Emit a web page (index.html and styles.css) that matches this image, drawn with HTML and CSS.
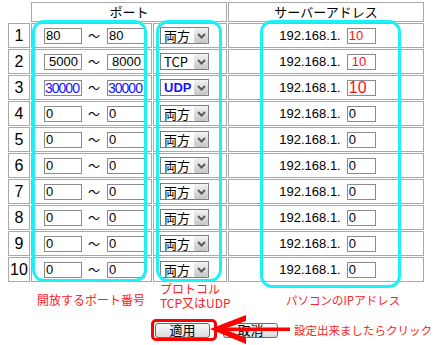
FILE: index.html
```html
<!DOCTYPE html>
<html lang="ja">
<head>
    <meta charset="UTF-8">
    <meta name="viewport" content="width=device-width, initial-scale=1.0">
    <title>ポート設定</title>
    <link rel="stylesheet" href="styles.css">
</head>
<body>
    <div class="page">
        <table class="ports">
            <colgroup>
                <col class="col-num">
                <col class="col-port">
                <col class="col-proto">
                <col class="col-addr">
            </colgroup>
            <tr class="head">
                <th class="blank"></th>
                <th colspan="2">ポート</th>
                <th>サーバーアドレス</th>
            </tr>
            <tr>
                <td class="num">1</td>
                <td><div class="range"><input class="field" value="80"><span class="tilde">～</span><input class="field" value="80"></div></td>
                <td><div class="select"><span class="select-text">両方</span><span class="select-arrow"><svg width="9" height="6" viewBox="0 0 9 6"><path d="M1 1 L4.5 4.5 L8 1" fill="none" stroke="#5a5a5a" stroke-width="2"/></svg></span></div></td>
                <td><div class="addr"><span class="ip">192.168.1.</span><input class="host red" value="10"></div></td>
            </tr>
            <tr>
                <td class="num">2</td>
                <td><div class="range"><input class="field pad" value="5000"><span class="tilde">～</span><input class="field pad" value="8000"></div></td>
                <td><div class="select"><span class="select-text">TCP</span><span class="select-arrow"><svg width="9" height="6" viewBox="0 0 9 6"><path d="M1 1 L4.5 4.5 L8 1" fill="none" stroke="#5a5a5a" stroke-width="2"/></svg></span></div></td>
                <td><div class="addr"><span class="ip">192.168.1.</span><input class="host red pad" value="10"></div></td>
            </tr>
            <tr>
                <td class="num">3</td>
                <td><div class="range"><input class="field blue" value="30000"><span class="tilde">～</span><input class="field blue" value="30000"></div></td>
                <td><div class="select"><span class="select-text blue-bold">UDP</span><span class="select-arrow"><svg width="9" height="6" viewBox="0 0 9 6"><path d="M1 1 L4.5 4.5 L8 1" fill="none" stroke="#5a5a5a" stroke-width="2"/></svg></span></div></td>
                <td><div class="addr"><span class="ip">192.168.1.</span><input class="host red big" value="10"></div></td>
            </tr>
            <tr>
                <td class="num">4</td>
                <td><div class="range"><input class="field" value="0"><span class="tilde">～</span><input class="field" value="0"></div></td>
                <td><div class="select"><span class="select-text">両方</span><span class="select-arrow"><svg width="9" height="6" viewBox="0 0 9 6"><path d="M1 1 L4.5 4.5 L8 1" fill="none" stroke="#5a5a5a" stroke-width="2"/></svg></span></div></td>
                <td><div class="addr"><span class="ip">192.168.1.</span><input class="host" value="0"></div></td>
            </tr>
            <tr>
                <td class="num">5</td>
                <td><div class="range"><input class="field" value="0"><span class="tilde">～</span><input class="field" value="0"></div></td>
                <td><div class="select"><span class="select-text">両方</span><span class="select-arrow"><svg width="9" height="6" viewBox="0 0 9 6"><path d="M1 1 L4.5 4.5 L8 1" fill="none" stroke="#5a5a5a" stroke-width="2"/></svg></span></div></td>
                <td><div class="addr"><span class="ip">192.168.1.</span><input class="host" value="0"></div></td>
            </tr>
            <tr>
                <td class="num">6</td>
                <td><div class="range"><input class="field" value="0"><span class="tilde">～</span><input class="field" value="0"></div></td>
                <td><div class="select"><span class="select-text">両方</span><span class="select-arrow"><svg width="9" height="6" viewBox="0 0 9 6"><path d="M1 1 L4.5 4.5 L8 1" fill="none" stroke="#5a5a5a" stroke-width="2"/></svg></span></div></td>
                <td><div class="addr"><span class="ip">192.168.1.</span><input class="host" value="0"></div></td>
            </tr>
            <tr>
                <td class="num">7</td>
                <td><div class="range"><input class="field" value="0"><span class="tilde">～</span><input class="field" value="0"></div></td>
                <td><div class="select"><span class="select-text">両方</span><span class="select-arrow"><svg width="9" height="6" viewBox="0 0 9 6"><path d="M1 1 L4.5 4.5 L8 1" fill="none" stroke="#5a5a5a" stroke-width="2"/></svg></span></div></td>
                <td><div class="addr"><span class="ip">192.168.1.</span><input class="host" value="0"></div></td>
            </tr>
            <tr>
                <td class="num">8</td>
                <td><div class="range"><input class="field" value="0"><span class="tilde">～</span><input class="field" value="0"></div></td>
                <td><div class="select"><span class="select-text">両方</span><span class="select-arrow"><svg width="9" height="6" viewBox="0 0 9 6"><path d="M1 1 L4.5 4.5 L8 1" fill="none" stroke="#5a5a5a" stroke-width="2"/></svg></span></div></td>
                <td><div class="addr"><span class="ip">192.168.1.</span><input class="host" value="0"></div></td>
            </tr>
            <tr>
                <td class="num">9</td>
                <td><div class="range"><input class="field" value="0"><span class="tilde">～</span><input class="field" value="0"></div></td>
                <td><div class="select"><span class="select-text">両方</span><span class="select-arrow"><svg width="9" height="6" viewBox="0 0 9 6"><path d="M1 1 L4.5 4.5 L8 1" fill="none" stroke="#5a5a5a" stroke-width="2"/></svg></span></div></td>
                <td><div class="addr"><span class="ip">192.168.1.</span><input class="host" value="0"></div></td>
            </tr>
            <tr>
                <td class="num">10</td>
                <td><div class="range"><input class="field" value="0"><span class="tilde">～</span><input class="field" value="0"></div></td>
                <td><div class="select"><span class="select-text">両方</span><span class="select-arrow"><svg width="9" height="6" viewBox="0 0 9 6"><path d="M1 1 L4.5 4.5 L8 1" fill="none" stroke="#5a5a5a" stroke-width="2"/></svg></span></div></td>
                <td><div class="addr"><span class="ip">192.168.1.</span><input class="host" value="0"></div></td>
            </tr>
        </table>

        <div class="notes">
            <div class="note note-port">開放するポート番号</div>
            <div class="note note-proto">プロトコル<br>TCP又はUDP</div>
            <div class="note note-addr">パソコンのIPアドレス</div>
        </div>

        <div class="actions">
            <button class="btn">適用</button>
            <button class="btn">取消</button>
            <span class="hint">設定出来ましたらクリック</span>
        </div>

        <!-- annotations drawn over the form -->
        <div class="mark mark-port"></div>
        <div class="mark mark-proto"></div>
        <div class="mark mark-addr"></div>
        <div class="mark mark-btn"></div>
        <svg class="arrow" width="90" height="34" viewBox="0 0 90 34">
            <rect x="14" y="14.5" width="68" height="3.5" fill="#ff0000"/>
            <polygon points="2,16 38,2 38,8 16,16 38,25 38,31" fill="#ff0000"/>
        </svg>
    </div>
</body>
</html>
```

FILE: styles.css
```css
* {
    box-sizing: border-box;
}
body {
    margin: 0;
    background: #ffffff;
    font-family: "Liberation Sans", "Noto Sans CJK JP", sans-serif;
    color: #000;
}
.page {
    position: relative;
    width: 435px;
    height: 345px;
    overflow: hidden;
}
.ports {
    margin: 1px 0 0 7px;
    width: 418px;
    table-layout: fixed;
    border-collapse: separate;
    border-spacing: 1px;
}
.col-num { width: 22px; }
.col-port { width: 121px; }
.col-proto { width: 74px; }
.col-addr { width: 196px; }
.ports th, .ports td {
    border: 1px solid #a9a9a9;
    padding: 0;
}
.ports th {
    height: 20px;
    font-weight: normal;
    font-size: 13px;
    line-height: 16px;
    font-family: "Noto Sans CJK JP", sans-serif;
}
.ports .blank {
    border: none;
}
.ports td {
    height: 25px;
}
.num {
    text-align: center;
    font-family: "Liberation Sans Narrow", "Liberation Sans", sans-serif;
    font-size: 16px;
}
.range {
    display: flex;
    align-items: center;
    padding-left: 12px;
}
.field, .host {
    height: 16px;
    border: 1px solid #8c8c8c;
    padding: 0 1px;
    margin: 0;
    font-family: "Liberation Sans", sans-serif;
    font-size: 13px;
    background: #fff;
    color: #000;
}
.field {
    width: 38px;
}
.pad {
    padding-left: 4px;
}
.blue {
    color: #1414ff;
    font-size: 14px;
    letter-spacing: -1px;
    padding-left: 0;
}
.tilde {
    width: 12px;
    margin: 0 7px 0 6px;
    font-family: "Noto Sans CJK JP", sans-serif;
    font-size: 12px;
    line-height: 14px;
}
.select {
    display: flex;
    align-items: center;
    width: 49px;
    height: 17px;
    margin-left: 6px;
    border: 1px solid #7f7f7f;
    background: #fff;
}
.select-text {
    flex: 1;
    padding-left: 3px;
    font-family: "Noto Sans CJK JP", sans-serif;
    font-size: 13px;
    line-height: 15px;
}
.blue-bold {
    color: #1414ff;
    font-weight: bold;
    font-family: "Liberation Sans", sans-serif;
}
.select-arrow {
    display: flex;
    align-items: center;
    justify-content: center;
    width: 14px;
    height: 15px;
    border-radius: 2px;
    background: linear-gradient(#f4f4f4, #c6c6c6);
}
.addr {
    display: flex;
    align-items: center;
    justify-content: center;
    gap: 6px;
    padding-left: 3px;
    font-size: 13px;
}
.host {
    width: 29px;
}
.red {
    color: #ff1010;
}
.big {
    font-size: 16px;
}
.notes {
    display: flex;
    align-items: flex-start;
    color: #ff2020;
    font-family: "Noto Sans CJK JP", sans-serif;
    font-size: 12px;
    line-height: 14px;
}
.note-port {
    width: 123px;
    margin-left: 37px;
    margin-top: 10px;
}
.note-proto {
    width: 126px;
    margin-top: -1px;
}
.note-addr {
    margin-top: 10px;
    font-size: 11.5px;
}
.actions {
    display: flex;
    align-items: center;
    margin-top: 12px;
    padding-left: 155px;
}
.btn {
    width: 55px;
    height: 15px;
    padding: 0;
    margin-right: 13px;
    border: 1px solid #6a6a6a;
    border-radius: 3px;
    background: linear-gradient(#fbfbfb, #dadada);
    font-family: "Noto Sans CJK JP", sans-serif;
    font-size: 13px;
    line-height: 12px;
    color: #000;
}
.hint {
    margin-left: 3px;
    color: #ff2020;
    font-family: "Noto Sans CJK JP", sans-serif;
    font-size: 11.5px;
}
.mark {
    position: absolute;
    border: 3px solid #1ef0f8;
    border-radius: 12px;
}
.mark-port { left: 32px; top: 20px; width: 115px; height: 262px; }
.mark-proto { left: 156px; top: 20px; width: 66px; height: 262px; }
.mark-addr { left: 260px; top: 20px; width: 141px; height: 268px; }
.mark-btn {
    left: 151px;
    top: 319px;
    width: 66px;
    height: 22px;
    border-color: #ff0000;
    border-radius: 5px;
}
.arrow {
    position: absolute;
    left: 208px;
    top: 313px;
}
```
